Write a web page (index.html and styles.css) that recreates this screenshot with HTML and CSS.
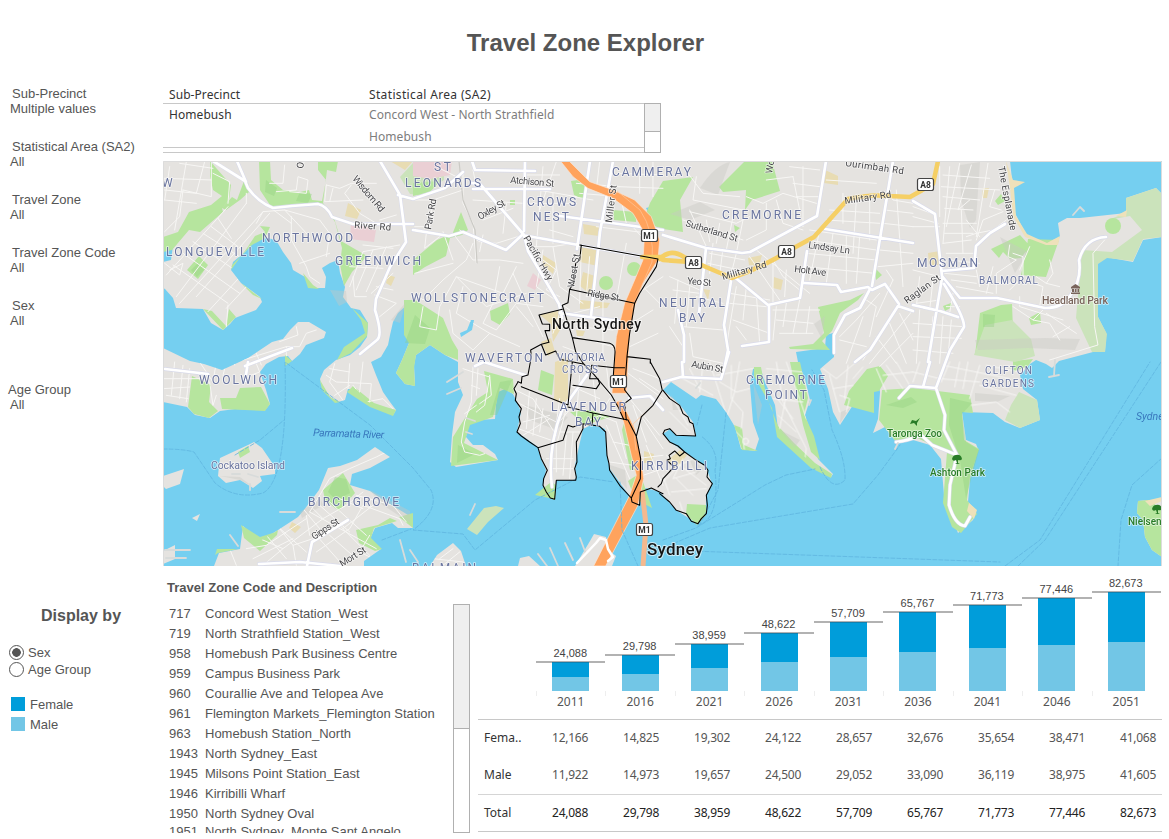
FILE: index.html
```html
<!DOCTYPE html>
<html lang="en">
<head>
<meta charset="utf-8">
<title>Travel Zone Explorer</title>
<link rel="stylesheet" href="styles.css">
</head>
<body>
<div class="dashboard">
<header class="title"><h1>Travel Zone Explorer</h1></header>
<aside class="filters">
  <div class="filter"><span class="name">Sub-Precinct</span><span>Multiple values</span></div>
  <div class="filter"><span class="name">Statistical Area (SA2)</span><span>All</span></div>
  <div class="filter"><span class="name">Travel Zone</span><span>All</span></div>
  <div class="filter"><span class="name">Travel Zone Code</span><span>All</span></div>
  <div class="filter"><span class="name">Sex</span><span>All</span></div>
  <div class="filter age"><span class="name">Age Group</span><span>All</span></div>
</aside>
<section class="areas">
  <div class="area-head"><span>Sub-Precinct</span><span>Statistical Area (SA2)</span></div>
  <div class="area-body">
    <div class="area-rows"><strong>Homebush</strong><span>Concord West - North Strathfield</span><i></i><span>Homebush</span></div>
    <div class="scroll small"><b></b></div>
  </div>
</section>
<section class="map">
<svg viewBox="163 161 999 405" width="999" height="405">
<defs>
  <g id="tree"><path d="M-5-1Q-4-5-1-5Q4-6 5-1Q4 1 1 0L1 3L3 4H-2L0 3L-1 0Q-4 2-5-1Z"/></g>
  <path id="harbour" d="M163 288L165 289L173 298L176 308L203 309L211 323L223 330L230 324L235 318L256 310L262 302L260 297L241 283L231 270L233 262L245 252L253 242L263 237L276 240L283 252L291 263L293 270L305 277L310 288L325 288L326 277L322 268L330 263L338 260L340 273L345 287L343 297L351 308L360 310L368 323L367 337L360 347L350 355L336 360L324 370L320 379L321 384L330 397L338 402L345 400L348 389L356 389L370 404L393 415L396 410L390 402L383 392L376 375L371 362L381 357L388 345L390 335L393 322L398 313L410 302L408 307L406 325L409 343L402 360L396 373L405 384L415 386L414 365L416 355L430 345L445 355L458 362L458 382L463 395L455 412L452 435L450 462L456 467L498 460L495 454L483 445L473 445L466 437L468 424L476 420L495 419L496 405L498 392L505 389L513 394L516 400L521 412L517 432L538 447L541 459L546 470L543 485L546 495L555 499L556 480L576 480L575 465L580 442L583 429L593 424L605 429L607 455L610 469L631 498L640 505L640 492L646 488L660 492L676 510L698 524L706 514L706 495L712 484L706 467L685 452L670 442L663 434L670 429L676 435L696 436L693 422L680 405L663 390L671 382L696 399L701 395L716 399L726 412L735 427L741 449L755 451L759 439L753 422L750 385L753 369L760 367L765 382L775 405L778 429L796 449L816 467L831 477L833 474L818 459L813 439L805 415L810 400L805 379L798 362L796 352L825 348L826 335L833 333L834 357L820 369L828 389L833 412L840 425L855 402L863 379L876 374L880 392L878 419L873 433L885 427L896 442L913 440L930 445L941 459L944 495L958 533L973 520L976 510L968 502L970 479L978 449L976 444L966 440L962 412L993 413L1005 422L1020 428L1040 420L1037 400L1023 389L1020 375L1030 364L1036 360L1046 364L1052 368L1059 361L1093 352L1105 352L1106 333L1098 317L1098 260L1106 257L1133 262L1143 240L1162 237V566H163Z"/>
  <path id="bays" d="M1010 161L1013 188L1015 213L1026 235L1046 243L1060 237L1058 223L1067 218H1080L1126 213V198L1156 188L1162 194V161ZM747 161L756 171H766L767 161ZM646 208L650 207L654 213L650 216ZM163 245L173 246L171 260L163 262ZM471 320L474 320L472 330L461 337L460 333L467 330Z"/>
  <g id="south">
  <path d="M163 348L190 361L204 364L222 370L248 358L272 342L283 339L290 330L298 322L309 322L326 332L324 338L306 345L300 354L292 361L288 356L279 357L266 364L260 372L266 390L270 404L265 410L235 409L220 411L210 418L195 415L187 407L163 402Z"/>
  <path d="M220 458L248 445L254 442L262 448L275 467L275 474L260 476L262 481L253 488L240 480L226 483L218 476L219 466ZM163 476L184 469L180 484L166 489L163 486ZM192 518L200 514L197 521ZM163 551L175 545L175 559L163 564ZM214 566L219 553L240 549L243 526L260 541L278 530L298 517L304 510L319 490L328 468L340 466L357 460L375 447L390 457L370 468L352 474L350 485L370 491L385 501L413 518V528L398 528L392 523L375 528L369 541L381 549L364 561V566ZM430 566L437 555L453 543L461 551L466 566ZM575 566L590 541L594 534L606 537L608 550L616 556L612 566ZM518 566L520 558L529 556L540 566ZM1162 500L1148 500L1138 501L1137 513L1143 520L1145 537L1152 550L1162 557Z"/>
  </g>
  <mask id="dry" maskUnits="userSpaceOnUse" x="163" y="161" width="999" height="405">
    <rect x="163" y="161" width="999" height="405" fill="#fff"/>
    <g fill="#000"><use href="#harbour"/><use href="#bays"/></g>
    <g fill="#fff"><use href="#south"/></g>
  </mask>
</defs>
<rect class="land" x="163" y="161" width="999" height="405"/>
<g class="water"><use href="#harbour"/><use href="#bays"/></g>
<g class="land"><use href="#south"/></g>
<g class="park">
<path d="M210 161L231 185L229 200L222 208L226 210L240 200L249 192L248 182L244 181L237 200L232 197L222 208L223 212L208 225L200 232L189 230L172 250L163 252V237L178 232L189 212L211 205L222 196L213 190L210 176Z"/>
<path d="M259 161H270L271 180L283 190L300 192L309 190L312 200L322 201L326 180L318 170V161H338L336 172L327 170L323 203L334 218L341 241L367 256L352 272L344 286L340 264L342 248L335 222L322 203L290 206L272 208L260 190Z"/>
<path d="M199 256L208 265L198 279L187 270ZM203 309L223 330L236 317L229 309L226 326L212 311ZM247 248L255 236L265 232L260 226L270 227L265 238L252 245L232 265L231 270ZM241 283L262 299L253 295ZM303 273L313 285L319 289L308 288ZM352 308L368 323L367 336L351 353L337 360L344 347L365 333L361 320ZM320 380L330 397L340 402L335 403L322 390ZM347 392L353 386L374 403L386 407L396 410L393 416L370 407Z"/>
<path d="M192 376L211 385L209 402L218 411L209 418L194 414L188 407ZM220 398L236 398L240 388L261 387L270 404L265 411L222 409ZM285 355L292 361L285 366ZM238 452L248 446L250 452L240 458ZM241 525L260 537L276 532L266 538L278 530L277 535L260 551L244 538ZM323 490L343 473L355 493L339 511L325 500ZM215 555L217 549L238 549L218 553ZM356 530L378 525L390 518L397 521L374 528L371 538L382 549L375 551L359 543ZM399 517L413 513V528Z"/>
<path d="M413 161H445L430 190L413 195ZM452 235L461 212L468 230L462 235L450 238L446 256L425 267L413 275V260L437 240L451 234ZM404 300L415 300L443 318L452 340L458 350L458 360L445 355L430 345L416 355L414 368L415 386L405 384L396 373L402 360L409 343L404 335ZM490 311L508 303L510 314L500 325L491 320ZM484 371L513 379L514 394L500 388L493 417L470 425L464 443L498 460L451 466L453 437L477 399L488 392ZM571 181L585 179V200L574 195ZM510 200L515 200V205H510ZM613 210L636 212V222L614 220Z"/>
<path d="M663 181L693 177L680 200L683 232L663 229L643 222L650 203ZM719 187L745 161H772L780 191L752 200L745 210L746 190L723 192ZM734 225L740 228L735 232ZM818 307L850 300L864 293L858 300L840 313L832 331L822 341L830 350L790 349L789 347L813 344L824 333ZM875 268L882 275L876 280ZM535 495L551 482L556 485L555 500L549 498ZM628 481L640 473L652 508L635 499ZM687 504L706 505L706 515L697 525L686 514ZM754 367L761 367L766 395L778 426L794 443L815 463L832 474L831 478L811 468L777 437L772 408L754 376ZM734 425L742 428L744 445L758 451L742 450ZM790 362H800L808 398L804 414L814 436L820 460L811 452L803 425ZM849 391L867 369L880 366L888 376L879 391L874 392L874 413L844 405Z"/>
<path d="M882 390L913 388L970 395L973 413L962 412L964 440L979 449L970 476L967 500L977 514L961 533L952 527L943 503L947 452L913 436L896 442L879 420ZM1148 500L1138 501L1137 513L1143 520L1145 537L1152 550L1162 557V509ZM991 249L1020 235L1030 246L1021 258L1010 259L1003 252L999 258ZM1028 239L1059 240L1046 277L1021 275L1027 246ZM980 313L1001 305L1012 304L1013 330L1001 325L985 330L975 355ZM995 201L1001 194L1005 201L998 205ZM625 420L634 440L640 470L630 470L622 430ZM570 412L590 410L610 417L585 425ZM1013 361L1033 359L1028 366L1013 372ZM943 306L951 303L952 307L945 311ZM1029 318L1040 312L1041 323L1031 325Z"/>
</g>
<g class="reserve"><path d="M1126 198L1156 188L1162 194V237L1143 239L1133 261L1107 258L1098 264L1098 317L1107 334L1105 352L1092 352L1076 318L1082 250L1112 252L1142 230L1130 216L1108 220L1126 213ZM974 355L985 325L1012 320L1031 339L1035 356L1015 362L980 356ZM1019 392L1037 400L1040 420L1020 428L1005 420L1011 405ZM467 529L484 508L496 506L504 508L488 522L477 535ZM400 177L413 163H430L444 165V180L420 195L410 194Z"/></g>
<g class="park"><circle cx="1113" cy="226" r="8"/><circle cx="606" cy="283" r="7"/><circle cx="634" cy="269" r="7"/><path d="M413 183L440 181L430 192L413 196Z"/></g>
<g class="hill"><path d="M700 188Q715 165 730 162L724 178L718 195ZM960 165L980 162L976 220L970 228L961 200ZM1000 237L1028 252L1015 273ZM670 214L700 202L715 210L690 220ZM391 320L406 302L400 323ZM975 340L1045 338L1080 339L1075 350L1028 348L978 350ZM975 393L1010 396L997 402L975 401ZM814 324L825 316L822 339ZM330 290L346 291L347 302L339 306ZM525 405L568 417L557 430L530 420ZM610 465L625 470L627 489L610 470ZM671 395L683 410L673 410ZM689 458L704 468L696 475ZM753 382L762 405L758 425ZM780 430L800 440L795 447ZM841 412L850 408L840 423ZM220 476L240 477L253 487L240 480ZM300 512L320 498L323 505L302 518ZM370 490L410 511V523L380 503Z"/></g>
<g class="darkpark"><path d="M198 263L204 270L197 277L191 270ZM266 180L277 188L274 196L265 192ZM300 192L312 194L308 203L296 201ZM335 477L346 479L350 493L336 500L328 492ZM950 398L972 403L962 414L966 442L979 450L966 498L960 460L949 425ZM500 382L512 380L497 415H490ZM415 315L430 328L425 344L405 343ZM886 405L911 397L917 402L903 408ZM983 314L995 315L994 327L983 327ZM458 445L475 454L457 463Z"/></g>
<g class="school"><path d="M348 203L361 210L357 219L345 216ZM388 275L395 277L391 286L386 283ZM580 246L600 251L598 266L580 262ZM583 224L600 227L599 236L584 234ZM543 255L556 263L553 274L543 265ZM583 272L595 276L590 294L580 286ZM540 315L562 310L560 330L553 342L551 324ZM555 362L568 357V407L554 400ZM823 169L838 176L838 185L824 183ZM774 277L783 280L781 290L773 288ZM748 258L762 255L759 266L749 265ZM703 289L710 290L708 300ZM983 188L989 188L987 198L982 198ZM928 253L940 251L939 265H929ZM668 460L680 450L687 455L678 467ZM644 451L654 454L652 463H644ZM292 522L301 527L295 533L289 528ZM390 161H413L405 170ZM580 300L610 303L607 308L580 309ZM541 342L551 338L555 352L548 356ZM576 330L585 331L583 336H577Z"/></g>
<g class="park"><path d="M541 370L554 375L552 395L538 390Z"/></g>
<g class="pink"><path d="M351 222L376 230L374 242L350 239ZM413 161H452L450 175L430 179L413 176ZM533 273L541 280L535 290L527 286Z"/></g>
<path class="sand" d="M1006 161L1013 180L1025 182L1014 188L1016 216L1027 234L1047 243L1060 236L1058 245L1046 245L1025 237L1013 216L1010 188ZM1116 216L1127 210L1126 217ZM969 503L977 510L974 519L967 511ZM1145 501L1162 497V501L1150 506Z"/>

<!-- local streets: each group covers one quarter-width sheet, drawn at 3x -->
<g mask="url(#dry)">
<g class="minor" transform="translate(163 160) scale(.3333)"><path d="M20 20L5 120M70 5L35 210M125 5L100 100L5 90M5 55L145 60M5 120L100 130M150 25L50 10M145 5V110L60 90M60 90L50 170L5 215M10 345L195 140M40 410L250 130M50 430L300 155M100 410L320 160M135 455L250 330M190 445L255 375M5 310L50 345L60 310L20 330M30 315L195 430M60 280L230 400M90 245L260 360M120 220L260 310M145 200L225 260M165 175L205 235M195 130L200 65L150 40M250 130V100M195 435L190 500M280 190L300 155L365 150L470 180L500 220L490 290M365 150L440 230M325 145L385 190M385 170L385 240L430 320L440 350L470 370M410 310L470 290L500 280M320 70L360 70L365 15M340 95L400 90L405 50L435 60L430 100L380 95M490 75L530 85L565 70L640 70M490 75L485 125L600 120M510 85L500 125M565 75L545 100L590 160L640 190M560 380L600 275L710 255M580 390L630 270M610 395L670 260M560 320L660 325M570 350L575 410H610M625 400L690 340M650 180L700 165M600 255L690 265M640 380L690 390M635 405L700 430L650 470M240 600L370 560L410 560L430 520L460 510M400 500L405 525L350 545M210 555L215 615M280 580L295 615M370 560L370 612"/></g>
<g class="minor" transform="translate(413 160) scale(.3333)"><path d="M5 120L60 120L50 200L5 200M70 20L150 60M60 120L150 90M180 120L330 130M210 180L300 145M270 220L280 130M180 30L190 80M390 20L370 260M430 5L380 150M340 45H440M345 85L490 110M350 130H490M420 100V250M490 70L620 80M500 100L620 110M560 5L550 90M680 5V100M720 5V110M615 40L750 45M615 80L750 85M480 110L540 120M440 170L560 180M410 210L480 230M625 120L640 190M650 190L690 235M140 210L200 245L250 250L330 225M150 40L150 130L180 190L190 310M40 220L35 265L80 230M90 215L120 300M5 340L120 310M120 220L180 300L260 300L330 310M210 225L200 275M180 250L160 300L90 360L30 420L5 400M30 440L20 500L70 510L80 440L130 350L270 400L310 320M130 350L220 440L340 400M150 380L130 460L230 520L180 570L120 520L110 450M260 320L240 430L210 490L250 510L310 430L390 440M300 340L340 430L390 530M230 520L320 560M310 440L360 500M340 260L420 260L480 250M390 270L370 380L470 450M420 260L440 380L510 430M505 260L500 430M640 250L610 420M560 440L480 460M550 200L710 220M530 290L520 410M570 420V600M490 500L600 510M490 530L600 560M640 500L720 450M650 560L735 520M660 410L750 350M690 380L750 440M690 340L750 300M390 300L430 330L400 390L440 410M450 560L560 600M420 520L450 430"/></g>
<g class="minor" transform="translate(663 160) scale(.3333)"><path d="M75 40L120 100L230 110M100 50L90 120L240 150M80 150L130 260M60 180L240 240M130 180L140 245M170 190L160 250M210 170L190 270M240 180L220 280M80 155L220 190L260 170M140 280L245 300M135 310L230 330M150 250L140 340M180 265L170 345M220 280L205 340M250 110L300 130L360 100L460 130M310 130V210L250 240M340 120L360 190L420 210M390 50L410 150M420 20V200M380 20L470 30M390 70L470 80M400 110L470 110M310 60L390 50M540 100L540 190M580 120L570 280M620 110V240M490 60L640 70M500 150L650 160M490 180L650 190M440 210L640 240M430 240L640 270M430 280L640 300M425 320L635 340M470 210L440 360M510 220L490 370M550 230V370M590 230L580 370M670 90L690 120L750 130M665 150L750 160M660 190L750 200M650 270L750 280M645 320L750 310M700 90L720 380M670 330L690 360M280 270L440 400M260 290L350 420M290 310L330 300L360 350L410 390M330 310V430M370 330L365 410M20 350L110 390M30 390L110 400M45 360L35 490M80 380L70 500M100 410L180 430M60 500L180 510M200 400L320 420M200 430L310 440M220 380L190 560M250 380L240 480M280 400L290 550M210 480L320 520M220 500L250 540M340 440L330 540M370 430L360 500M410 420L390 520M440 440L430 520M330 450L470 450M340 480L450 490M350 520L450 520M80 520L90 590L180 610M20 500L60 560M610 420L640 440L620 530M650 400L580 480L530 530M700 440L600 600M750 450L620 610M690 360L640 470M530 540L610 560M600 470L550 610M640 530L700 610M680 490L730 610M710 460L750 540M650 620L750 520"/></g>
<g class="minor" transform="translate(913 160) scale(.3333)"><path d="M80 20L80 170M110 20L90 250M140 10L100 200M175 15L135 150L170 120M225 10L190 230M90 45L230 55M85 80L260 90M90 110L200 120M95 145L180 150M90 190L190 190M95 220L180 220M90 250L175 240M145 150L150 280M160 180L200 230M245 90L230 140L265 150M270 155L210 180L190 240M280 180L240 210L190 220L160 230M0 140L70 165M0 170L75 190M0 200H80M0 330L80 350M20 350L10 440M60 360L50 450M100 280L190 280M110 300L200 310M95 340L190 350M115 360L190 370M130 380L240 400M190 330L200 380M240 320L220 400M290 255L285 290L310 300L250 340V400M300 280L330 290L330 350L290 390M260 370L310 370M350 260L320 330M370 350L400 370L420 340L410 300M360 370L390 380L380 440M400 370L440 380M320 410V440L450 480M390 450L360 480L410 490L440 540M400 460L490 520M420 530L470 500M300 440L360 480M575 240L540 280L545 500L555 555L410 600M60 470L50 610M90 470L80 610M20 450L10 610M115 480L105 590M0 490L150 500M0 530L145 535M0 570L120 580M120 400L110 460M100 440H140M80 420L10 430"/></g>
<g class="minor" transform="translate(163 362) scale(.3333)"><path d="M35 0L25 100M60 10L50 110M80 20L70 120M0 50H110M0 80L80 75M10 100L75 110M110 0L150 60L160 0M140 60L150 130L160 100M190 0L180 40M250 45L290 30L280 5M515 5L500 60L540 115M490 40L520 60L625 65L620 120M500 20L560 30M560 5L555 80M600 0L590 90M515 100L560 70M570 70L610 120L660 110L690 140M440 450L500 350L560 320L640 285L670 270M450 440L480 470L550 430L600 390M420 440L470 500M440 450L640 560M470 430L560 510M500 420L610 520M530 410L600 440M350 500L390 550L450 530M310 520L370 590M290 530L360 560L480 470M250 560L310 550L430 470M270 590L390 530M300 610L360 560M340 490L430 570M460 520L540 610M500 520L580 590M530 490L620 580M460 570L560 500L600 430L710 470L720 490M580 400L690 430L730 480M540 500L630 430M620 520L590 570L630 590M390 550L400 610M200 560L220 610M430 460L440 520"/></g>
<g class="minor" transform="translate(413 362) scale(.3333)"><path d="M180 15L175 120L155 180L145 240L155 270L200 280L215 275M150 20L180 30L230 45L215 130L190 150M155 155L190 130M195 20L190 100M230 40L235 100L200 125M175 70L200 80M300 80L360 110L430 220M350 80L340 200M370 110L360 220M310 120L430 180M330 180L410 160M315 200L430 240M390 140L380 210M410 170L330 220M440 110L410 340M460 140L430 250L430 330M490 120L430 190M500 40L490 170M470 70L560 110M530 20L500 70M540 50L550 130M560 60L600 110M580 10L590 90M590 110L560 160M440 210L500 210M400 290L480 290M410 320L480 320M460 220L450 340M480 210L470 350M520 180L560 160L610 180M580 190L650 350M610 180L640 290M600 240L650 250M590 300L660 310M640 30L750 110M650 110L740 220M680 50L740 90M660 130L700 240M690 170L750 260M670 290L750 280M700 250L750 370M690 340L750 320M660 20L740 50M80 590L120 560M90 610L140 570M60 590L150 600"/></g>
<g class="minor" transform="translate(663 362) scale(.3333)"><path d="M30 110L75 190M20 150L80 210M80 20L110 80M120 10L110 90M140 0L200 190L240 230L245 270M60 50L150 100M170 60L220 90L260 80M230 0L215 90L190 170M205 10V110L240 150L235 200M160 40L270 20M0 360L50 310L110 280M10 280L130 370M40 350L90 400M0 340L20 400M60 290L30 350L100 330M25 390L130 380M50 420L60 450M340 0L360 120L430 260L425 295M370 0L410 110L430 170M320 80L390 170M310 20L420 30M330 110L420 120M345 160L400 210M370 100L350 200M480 20L520 50L580 0M500 40L530 150M510 80L570 70M530 100L560 110L550 150M555 10L545 110M600 15L570 50M640 20L670 90M670 10L720 80M700 0L740 70M660 40L750 30"/><circle cx="248" cy="238" r="9"/></g>
<g class="minor" transform="translate(913 362) scale(.3333)"><path d="M0 30L80 50L200 60M20 0L0 60M50 0L30 70M90 10L190 30M110 0L85 60M140 0L125 75M165 0L150 80M200 10L170 110M190 30L290 50M200 70L310 100M175 130L250 120L290 150M220 10L320 30"/></g>
</g>
<path class="rail" d="M459 161L463 200L475 230L477 263"/>
<g class="halo"><path id="r" d="M213 161L245 181L248 188Q258 202 273 208L292 206L318 204Q327 206 332 217L353 224H413M237 161L246 182M380 161L400 195L406 242L390 267L376 299L375 310Q383 335 377 340L360 354M398 195L413 199L445 188L463 172M472 183L480 184L524 235L528 251L548 285L559 304L562 318M413 230L449 236L463 232L506 250L522 235L663 260M472 161L475 170L535 171M473 189H550M525 161L524 231M560 216L663 230M590 161L577 249M613 161L600 232L591 316M560 313L619 321M663 235L706 248L742 253L750 252L817 216L826 161M706 248L699 314M825 229L913 243M893 161L872 286M732 275L768 305L800 298L807 251M804 283L837 285L841 292L868 287L872 290L885 284L899 304M870 289L860 308L845 315L834 335V353M769 305L769 342L742 346M731 281L724 325L728 350L725 365M678 310L684 335V362M913 201L935 214L942 276L960 298L997 298L1045 308Q1063 308 1070 296Q1082 280 1079 260Q1085 238 1106 237M913 305L940 311L958 317M942 271L974 268L976 246L990 233L1005 224M942 278L928 362M944 284Q965 318 964 327L950 350L936 388L945 415L944 430L957 455L950 485L949 505Q955 525 965 526L970 517M913 311L898 306L870 350L855 362M165 369L208 374M245 381L248 362M245 366L292 348M307 566L312 542L348 520M259 564L300 562L340 566M475 366L484 362L525 375M552 487Q547 450 562 410L587 375M663 382L681 377L721 379L729 352M683 377L682 362M896 442Q908 441 921 435L932 445L957 455M899 398L910 386L936 388M923 387L930 362M629 398L650 396L663 410"/></g>
<g class="major"><use href="#r"/></g>
<g class="freeway"><path transform="translate(413 160) scale(.3333)" d="M440 0L480 50L525 85L600 115L660 160L695 220L690 300L665 360L635 430L610 530L603 615L597 700H640L645 615L650 520L665 440L690 370L735 300L740 240L715 170L665 120L600 90L530 65L465 0Z"/><path transform="translate(413 362) scale(.3333)" d="M608 120L632 180L655 280L670 340L650 400L542 612H578L675 430L692 350L685 290L665 200L625 115Z"/></g>
<path class="bridge" d="M642 490L646 525L643 566"/>
<path class="lane" d="M617 191L640 210Q655 232 652 262L632 308M646 412L633 424L636 450"/>
<g class="highway"><path d="M660 259Q670 248 684 257L706 267L732 278Q765 266 790 250L814 237L848 199Q870 194 890 196L910 197L933 184L938 161M663 260L690 262M642 257H661"/></g>
<g class="ferry"><path d="M163 449Q184 449 194 452L215 483Q235 500 263 493Q288 480 285 362L370 425L413 468L431 490Q440 510 413 530L463 534L475 550L535 500L580 477L614 482M663 540L696 528L765 485L786 475L815 469M663 548L710 528L853 504L878 475L900 445M698 525Q720 520 715 470Q720 450 701 436M663 550L1000 562M726 413L718 490L700 524M620 482L622 530L638 566M702 405L697 425M820 467Q832 493 845 480Q846 460 832 430L824 390L812 370M1005 566L1040 540L1150 362M1018 566L1045 540L1161 362M1162 458L1132 485L1121 520L1118 566M382 540L411 529M235 455L260 440L284 420"/></g>
<g class="zone" transform="translate(413 160) scale(.3333)"><path d="M500 255L735 297L730 320L680 400L665 430L470 388L482 370L488 310L500 300L505 255ZM470 388L465 428L448 436L478 533L590 550Q608 555 606 580L600 660M448 448L378 465L388 492L410 493L410 512L396 512L408 547L385 553L398 585L428 573L440 598L510 612M385 553L353 570L355 590L345 645L327 650L325 670L315 665M478 533L488 575L512 612L540 640L595 705L615 740L632 778M478 606L465 735L325 680M665 430L650 520L642 590L712 598V610M642 590L635 690L655 715L635 730L640 780"/></g>
<g class="zone" transform="translate(413 362) scale(.3333)"><path d="M315 60L303 80L310 95L307 115L325 140L318 165L322 185L312 210L325 222L350 240L375 257L450 235L465 190L480 195L510 185V200L490 240L492 300L485 320L490 345L488 355L430 355L425 412L412 408L400 390L390 370L392 350L403 325L385 290L375 257M465 135L540 153L645 174L670 223L683 290L682 350L655 408L620 370L590 325L588 305L582 280L578 210L560 193L510 185M540 153L537 190M655 408L657 420L680 430L682 390L715 378L750 395M480 70L550 80L560 65L555 50L530 50L536 10L605 17H635M712 0L740 50L748 85L720 130L685 165L670 223"/></g>
<g class="zone" transform="translate(663 362) scale(.3333)"><path d="M0 85L20 110L50 130L60 155L75 165L80 180L90 185L98 222L40 220L20 200L5 205L0 215L20 240L45 252L65 270L100 295L125 310L135 325L132 345L148 365L130 400L133 430L130 455L115 470L105 485L85 478L70 455L40 445L20 420L-10 395M65 270L50 282L35 267L18 280L22 290L12 295L33 315L0 350L-5 365L-15 375"/></g>
<g class="piers"><path d="M538 554L547 566M550 548L558 566M565 543L573 560M580 538L586 554M447 382L463 372M447 394L461 388M466 418L475 421M466 432L472 434M1055 360L1054 376M1049 377L1059 375M700 383L696 388M811 400L809 405M898 443L895 449M1073 215L1080 207L1084 211M165 550H190M166 558H186M280 512H295M230 535L238 546M400 540L406 562M410 550L418 562M232 474H240M248 474L258 477M250 484V490M470 515L475 504"/></g>
<g class="pier-road"><path d="M577 563L596 543L600 538L606 540L608 549L613 557L608 561"/></g>

<g class="suburb">
<text x="162" y="187" textLength="8">W</text><text x="166" y="256" textLength="98">LONGUEVILLE</text><text x="262" y="242" textLength="91">NORTHWOOD</text><text x="335" y="265" textLength="86">GREENWICH</text><text x="434" y="171" textLength="17">ST</text><text x="405" y="187" textLength="76">LEONARDS</text><text x="527" y="206" textLength="49">CROWS</text><text x="533" y="221" textLength="36">NEST</text><text x="612" y="176" textLength="79">CAMMERAY</text><text x="722" y="219" textLength="79">CREMORNE</text><text x="411" y="302" textLength="133">WOLLSTONECRAFT</text><text x="465" y="362" textLength="78">WAVERTON</text><text x="659" y="307" textLength="66">NEUTRAL</text><text x="679" y="322" textLength="26">BAY</text><text x="917" y="267" textLength="61">MOSMAN</text><text class="s10" x="979" y="284" textLength="59">BALMORAL</text><text x="199" y="384" textLength="78">WOOLWICH</text><text x="308" y="506" textLength="91">BIRCHGROVE</text><text x="551" y="411" textLength="75">LAVENDER</text><text x="575" y="426" textLength="26">BAY</text><text class="s10" x="557" y="361" textLength="48">VICTORIA</text><text class="s10" x="562" y="373" textLength="36">CROSS</text><text x="631" y="470" textLength="76">KIRRIBILLI</text><text x="746" y="384" textLength="79">CREMORNE</text><text x="765" y="399" textLength="42">POINT</text><text class="s10" x="985" y="374" textLength="47">CLIFTON</text><text class="s10" x="982" y="387" textLength="52">GARDENS</text><text x="412" y="572" textLength="64">BALMAIN</text><text class="place" x="211" y="469" textLength="74">Cockatoo Island</text>
</g>
<g class="street">
<text transform="translate(352 179) rotate(50)" textLength="44">Wisdom Rd</text><text transform="translate(354 228) rotate(4)" textLength="37">River Rd</text><text transform="translate(303 169) rotate(-80)">Ox</text><text transform="translate(431 230) rotate(-80)" textLength="31">Park Rd</text><text transform="translate(510 183) rotate(5)" textLength="44">Atchison St</text><text transform="translate(480 220) rotate(-30)" textLength="30">Oxley St</text><text transform="translate(612 223) rotate(-83)" textLength="38">Miller St</text><text transform="translate(523 238) rotate(60)" textLength="50">Pacific Hwy</text><text transform="translate(574 288) rotate(-80)" textLength="34">West St</text><text transform="translate(587 296) rotate(9)" textLength="32">Ridge St</text><text transform="translate(685 226) rotate(17)" textLength="54">Sutherland St</text><text transform="translate(687 284) rotate(5)" textLength="24">Yeo St</text><text transform="translate(723 280) rotate(-16)" textLength="46">Military Rd</text><text transform="translate(845 204) rotate(-8)" textLength="47">Military Rd</text><text transform="translate(808 248) rotate(8)" textLength="42">Lindsay Ln</text><text transform="translate(794 272) rotate(7)" textLength="32">Holt Ave</text><text transform="translate(845 166) rotate(8)" textLength="59">Ourimbah Rd</text><text transform="translate(772 174) rotate(-80)">Wo</text><text transform="translate(907 304) rotate(-36)" textLength="42">Raglan St</text><text transform="translate(998 167) rotate(79)" textLength="65">The Esplanade</text><text transform="translate(691 367) rotate(10)" textLength="32">Aubin St</text><text transform="translate(314 540) rotate(-33)" textLength="31">Gipps St</text><text transform="translate(342 567) rotate(-32)" textLength="29">Mort St</text>
</g>
<g class="river"><text transform="translate(313 436) rotate(2)" textLength="71">Parramatta River</text><text x="1136" y="420">Sydney</text></g>
<g class="poi"><text x="887" y="437" textLength="55">Taronga Zoo</text><text x="930" y="476" textLength="55">Ashton Park</text><text x="1128" y="525">Nielsen</text><g class="glyph"><use href="#tree" x="957" y="460"/><use href="#tree" x="1157" y="510"/><path d="M910 424L912 420L916 421L920 418L917 423V426L914 423Z"/></g></g>
<g class="museum"><text x="1042" y="304" textLength="66">Headland Park</text><path class="glyph" d="M1071 287L1075.500 284L1080 287V288.500H1071ZM1072 289H1074V292H1072ZM1074.700 289H1076.500V292H1074.700ZM1077.500 289H1079.200V292H1077.500ZM1071 292.500H1080V294H1071Z"/></g>
<g class="shield"><rect x="641.500" y="229.500" width="16" height="12" rx="2"/><rect x="610.500" y="375.500" width="16" height="12" rx="2"/><rect x="636.500" y="523.500" width="16" height="12" rx="2"/><rect x="685.500" y="256.500" width="16" height="12" rx="2"/><rect x="778.500" y="245.500" width="16" height="12" rx="2"/><rect x="917.500" y="178.500" width="16" height="12" rx="2"/><text x="649.5" y="238.5">M1</text><text x="618.5" y="384.5">M1</text><text x="644.5" y="532.5">M1</text><text x="693.5" y="265.5">A8</text><text x="786.5" y="254.5">A8</text><text x="925.5" y="187.5">A8</text></g>
<g class="city"><text x="552" y="329" textLength="89">North Sydney</text><text x="647" y="555" class="big" textLength="56">Sydney</text></g>
<path class="frame" d="M163.5 566V161.5H1161.5V566"/>
</svg>
</section>
<aside class="display">
  <h2>Display by</h2>
  <div class="option"><i class="radio on"></i>Sex</div>
  <div class="option"><i class="radio"></i>Age Group</div>
  <div class="legend"><i class="female"></i>Female</div>
  <div class="legend"><i class="male"></i>Male</div>
</aside>
<section class="zones">
  <h3>Travel Zone Code and Description</h3>
  <div class="zone-body">
    <div class="zone-rows">
      <b>717</b><span>Concord West Station_West</span><b>719</b><span>North Strathfield Station_West</span><b>958</b><span>Homebush Park Business Centre</span><b>959</b><span>Campus Business Park</span><b>960</b><span class="wide">Courallie Ave and Telopea Ave</span><b>961</b><span>Flemington Markets_Flemington Station</span><b>963</b><span>Homebush Station_North</span><b>1943</b><span>North Sydney_East</span><b>1945</b><span>Milsons Point Station_East</span><b>1946</b><span>Kirribilli Wharf</span><b>1950</b><span>North Sydney Oval</span><b class="last">1951</b><span class="last">North Sydney_Monte Sant Angelo</span>
    </div>
    <div class="scroll tall"><b></b></div>
  </div>
</section>
<section class="stats">
  <div class="chart">
    <div class="col"><em>24,088</em><div class="bar"><i style="height:15px"></i><u style="height:14px"></u></div></div>
    <div class="col"><em>29,798</em><div class="bar"><i style="height:19px"></i><u style="height:17px"></u></div></div>
    <div class="col"><em>38,959</em><div class="bar"><i style="height:24px"></i><u style="height:23px"></u></div></div>
    <div class="col"><em>48,622</em><div class="bar"><i style="height:29px"></i><u style="height:29px"></u></div></div>
    <div class="col"><em>57,709</em><div class="bar"><i style="height:35px"></i><u style="height:34px"></u></div></div>
    <div class="col"><em>65,767</em><div class="bar"><i style="height:40px"></i><u style="height:39px"></u></div></div>
    <div class="col"><em>71,773</em><div class="bar"><i style="height:43px"></i><u style="height:43px"></u></div></div>
    <div class="col"><em>77,446</em><div class="bar"><i style="height:47px"></i><u style="height:46px"></u></div></div>
    <div class="col"><em>82,673</em><div class="bar"><i style="height:50px"></i><u style="height:49px"></u></div></div>
  </div>
  <div class="years"><span>2011</span><span>2016</span><span>2021</span><span>2026</span><span>2031</span><span>2036</span><span>2041</span><span>2046</span><span>2051</span></div>
  <div class="table">
    <div class="row"><b>Fema..</b><span>12,166</span><span>14,825</span><span>19,302</span><span>24,122</span><span>28,657</span><span>32,676</span><span>35,654</span><span>38,471</span><span>41,068</span></div>
    <div class="row male-row"><b>Male</b><span>11,922</span><span>14,973</span><span>19,657</span><span>24,500</span><span>29,052</span><span>33,090</span><span>36,119</span><span>38,975</span><span>41,605</span></div>
    <div class="row total"><b>Total</b><span>24,088</span><span>29,798</span><span>38,959</span><span>48,622</span><span>57,709</span><span>65,767</span><span>71,773</span><span>77,446</span><span>82,673</span></div>
  </div>
</section>
</div>
</body>
</html>
```

FILE: styles.css
```css
* { box-sizing: border-box; }
body { margin: 0; background: #fff; color: #555; font: 13px/15px "Liberation Sans", Arial, sans-serif; overflow: hidden; }
h1, h2, h3 { margin: 0; font-weight: bold; color: #555; }
b, i, em, u { font-weight: normal; font-style: normal; text-decoration: none; }
.dashboard { width: 1169px; height: 839px; display: grid; grid-template-columns: 163px 313px 1fr; grid-template-rows: 86px 75px 405px 1fr; }
.title { grid-column: 1 / 4; display: flex; justify-content: center; padding: 29px 0 0 2px; }
h1 { font-size: 24px; line-height: 28px; }
.filters { grid-column: 1; grid-row: 2 / 4; padding-left: 10px; display: flex; flex-direction: column; gap: 23px; }
.filter { display: flex; flex-direction: column; white-space: nowrap; }
.filter .name { padding-left: 2px; }
.filter.age { margin-top: 31px; }
.age .name { margin-left: -4px; }
.areas { grid-column: 2 / 4; grid-row: 2; width: 498px; font-family: "Noto Sans", sans-serif; font-size: 12px; letter-spacing: .07px; color: #333; }
.area-head { height: 18px; padding-left: 6px; display: grid; grid-template-columns: 200px 1fr; line-height: 17px; border-bottom: 1px solid #c8c8c8; width: 481px; }
.area-head span:last-child { letter-spacing: .35px; }
.area-body { display: flex; height: 50px; margin-top: -1px; }
.area-rows { width: 481px; height: 50px; padding: 1px 0 0 6px; display: grid; grid-template-columns: 200px 1fr; grid-template-rows: 22px 22px; line-height: 22px; border-bottom: 1px solid #c8c8c8; background: linear-gradient(#c8c8c8, #c8c8c8) 0 44px / 100% 1px no-repeat; }
.area-rows strong { font-weight: normal; }
.area-rows span { color: #7d7d7d; }
.scroll { border: 1px solid #b0b0b0; }
.scroll b { display: block; background: #efefef; border-bottom: 1px solid #b0b0b0; }
.small { width: 17px; height: 50px; }
.small b { height: 28px; }
.map { grid-column: 2 / 4; grid-row: 3; }
.map svg { display: block; overflow: hidden; }
.land { fill: #e5e3e0; }
.water { fill: #75cff0; }
.park { fill: #b6e59e; }
.reserve { fill: #cbe3bb; }
.darkpark { fill: #91cf7d; opacity: .38; }
.hill { fill: #c9c9c4; opacity: .4; }
.school { fill: #e8dcb3; }
.pink { fill: #eacfd4; }
.sand { fill: #eee1ba; }
.minor, .halo, .major, .rail, .zone, .ferry, .piers, .bridge, .lane, .highway, .pier-road { fill: none; stroke-linecap: round; stroke-linejoin: round; }
.minor { stroke: #f7f6f4; stroke-width: 3; }
.halo { stroke: #d8daea; stroke-width: 3.8; }
.major { stroke: #fff; stroke-width: 2.7; }
.rail { stroke: #cbcac5; stroke-width: 1.2; }
.ferry { stroke: #5fb5e0; stroke-width: .8; stroke-dasharray: 4 2; }
.freeway { fill: #ffa35d; stroke: #fbe6d6; stroke-width: 2; }
.bridge { stroke: #f4b98f; stroke-width: 5; stroke-linecap: butt; }
.lane { stroke: #ffc599; stroke-width: .7; }
.highway { stroke: #f5cf65; stroke-width: 4.5; }
.zone { stroke: #000; stroke-width: 3.2; }
.piers { stroke: #d8dbda; stroke-width: 1.8; }
.pier-road { stroke: #fff; stroke-width: 2.5; }
.suburb, .street, .river, .poi, .museum, .city { font-family: Roboto, sans-serif; paint-order: stroke; stroke: #ffffffa0; stroke-width: 1.6px; stroke-linejoin: round; }
.suburb { fill: #69749f; font-size: 12px; }
.suburb .s10 { font-size: 10px; }
.suburb .place { font-size: 10.5px; }
.street { fill: #47474a; font-size: 9.6px; }
.river { fill: #3978bd; font-size: 10.5px; font-style: italic; stroke: none; }
.poi { fill: #287c27; font-size: 10px; font-weight: 500; }
.glyph { stroke: none; }
.museum { fill: #79645b; font-size: 10.5px; font-weight: 500; }
.city { fill: #151515; font-size: 14px; font-weight: 500; stroke-width: 2px; }
.city .big { font-size: 17px; }
.shield rect { fill: #fff; stroke: #444; stroke-width: 1.2; }
.shield text { fill: #333; font: bold 8.5px Roboto, sans-serif; text-anchor: middle; }
.frame { fill: none; stroke: #dcdcdc; }
.display { grid-column: 1; grid-row: 4; padding: 40px 0 0 9px; }
h2 { font-size: 16px; line-height: 20px; padding-left: 32px; margin-bottom: 18px; }
.option { display: flex; align-items: center; height: 17px; gap: 4px; }
.radio { width: 15px; height: 15px; border: 1px solid #555; border-radius: 50%; }
.radio.on { background: radial-gradient(circle, #555 0 4px, #fff 4.6px); }
.legend { display: flex; align-items: center; gap: 5px; height: 20px; padding-left: 2px; }
.option + .legend { margin-top: 16px; }
.legend i { width: 14px; height: 14px; }
.female, .bar i { background: #009dda; }
.male, .bar u { background: #72c6e6; }
.zones { grid-column: 2; grid-row: 4; padding-top: 14px; }
h3 { font-size: 13px; line-height: 15px; padding-left: 4px; margin-bottom: 9px; }
.zone-body { display: flex; height: 229px; }
.zone-rows { width: 290px; display: grid; grid-template-columns: 36px 1fr; grid-auto-rows: 20px; line-height: 20px; padding-left: 6px; overflow: hidden; align-content: start; white-space: nowrap; }
.zone-rows .wide { letter-spacing: .1px; }
.zone-rows .last { line-height: 16px; height: 9px; overflow: hidden; }
.tall { width: 17px; height: 229px; }
.tall b { height: 124px; }
.stats { grid-column: 3; grid-row: 4; width: 685px; padding-left: 2px; }
.chart { height: 125px; display: grid; grid-template-columns: repeat(9, 1fr); align-items: end; margin-left: 58px; }
.col em { display: block; text-align: center; font-size: 11px; line-height: 15px; height: 16px; padding-right: 1px; color: #444; }
.bar { border-top: 2px solid #b2b2b2; margin-top: -1px; display: flex; flex-direction: column; align-items: center; }
.bar i { width: 37px; margin-top: -1px; border-top: 1px solid #1180ae; }
.bar u { width: 37px; }
.years { margin-left: 58px; height: 28px; display: grid; grid-template-columns: repeat(9, 1fr); text-align: center; font: 12px/22px "Noto Sans", sans-serif; }
.years span { background: linear-gradient(#eee, #eee) 0 0 / 1px 5px no-repeat; }
.table { width: 684px; border-top: 1px solid #c8c8c8; border-bottom: 1px solid #c8c8c8; font: 12px/15px "Noto Sans", sans-serif; color: #333; }
.row { height: 35px; display: grid; grid-template-columns: 39px repeat(9, 71px); align-items: center; text-align: right; }
.row span { letter-spacing: -.27px; color: #555; }
.row b { text-align: left; padding-left: 6px; }
.male-row { height: 39px; }
.total { height: 37px; padding-bottom: 1px; border-top: 1px solid #d5d5d5; }
.total span { color: #222; }
```
